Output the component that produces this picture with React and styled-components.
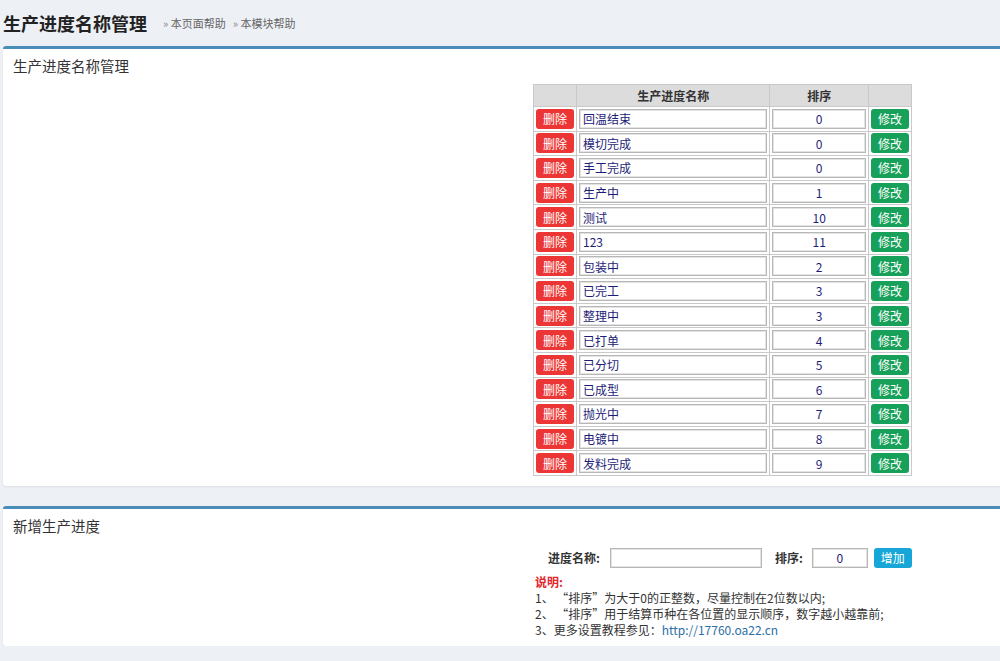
import React from 'react';
import styled, { createGlobalStyle } from 'styled-components';

const GlobalStyle = createGlobalStyle`
  html, body { margin: 0; padding: 0; }
  body {
    background: #edf0f5;
    font-family: "Noto Sans CJK SC", "Noto Sans", "Liberation Sans", sans-serif;
    color: #333;
    overflow: hidden;
  }
`;

const rows = [
  ['回温结束', 0], ['模切完成', 0], ['手工完成', 0], ['生产中', 1], ['测试', 10],
  ['123', 11], ['包装中', 2], ['已完工', 3], ['整理中', 3], ['已打单', 4],
  ['已分切', 5], ['已成型', 6], ['抛光中', 7], ['电镀中', 8], ['发料完成', 9],
];

const Header = styled.div`
  height: 46px;
  display: flex;
  align-items: center;
  padding-left: 3px;
`;

const PageTitle = styled.h1`
  margin: 0;
  font-size: 18px;
  font-weight: bold;
  color: #222;
`;

const HelpLink = styled.span`
  font-size: 11px;
  color: #666;
  margin-left: ${p => p.$first ? '16px' : '7px'};
  &::before { content: '» '; color: #888; }
`;

const Panel = styled.div`
  margin-left: 3px;
  background: #fff;
  border-top: 3px solid #4a8db8;
  border-radius: 3px 0 0 3px;
  box-shadow: 0 1px 2px rgba(0,0,0,0.08);
  padding-bottom: ${p => p.$bottom || 10}px;
  margin-bottom: ${p => p.$gap || 0}px;
`;

const PanelTitle = styled.div`
  height: ${p => p.$h}px;
  padding: 6px 0 0 10px;
  box-sizing: border-box;
  font-size: 14.5px;
  color: #333;
`;

const Body = styled.div`
  margin-left: 530px;
`;

const Table = styled.table`
  border-collapse: collapse;
  width: 379px;
  font-size: 12px;
  td, th { border: 1px solid #c9c9c9; padding: 0 2px; }
  th {
    background: #dcdcdc;
    height: 21px;
    font-weight: bold;
    color: #333;
  }
  td { height: 23.6px; }
`;

const Btn = styled.button`
  display: block;
  width: 38px;
  height: 20px;
  border: none;
  border-radius: 3px;
  padding: 0;
  font-family: inherit;
  font-size: 12px;
  color: #fff;
  background: ${p => p.$color};
  margin: 0 auto;
`;

const Field = styled.input`
  display: block;
  box-sizing: border-box;
  width: 100%;
  height: 20px;
  border: 1px solid #b7b7b7;
  box-shadow: inset 0 0 0 1px #e3e3e3;
  padding: 0 3px;
  font-family: inherit;
  font-size: 12px;
  color: #1d1d78;
  text-align: ${p => p.$center ? 'center' : 'left'};
  background: #fff;
`;

const FormRow = styled.div`
  display: flex;
  align-items: center;
  height: 20px;
  margin: 4px 0 0 15px;
  font-size: 12px;
`;

const Label = styled.span`
  font-weight: bold;
  color: #333;
  margin-right: ${p => p.$mr}px;
  margin-left: ${p => p.$ml || 0}px;
`;

const FormInput = styled(Field)`
  width: ${p => p.$w}px;
`;

const AddBtn = styled(Btn)`
  background: #16a7d8;
  margin: 0 0 0 6px;
`;

const Notes = styled.div`
  margin: 6px 0 0 2px;
  font-size: 12px;
  line-height: 16px;
  color: #333;
`;

const NoteTitle = styled.div`
  color: #e5262b;
  font-weight: bold;
`;

const Link = styled.a`
  color: #2c6ea6;
  text-decoration: none;
`;

export default function App() {
  return (
    <>
      <GlobalStyle />
      <Header>
        <PageTitle>生产进度名称管理</PageTitle>
        <HelpLink $first>本页面帮助</HelpLink>
        <HelpLink>本模块帮助</HelpLink>
      </Header>

      <Panel $gap={20} $bottom={10}>
        <PanelTitle $h={35}>生产进度名称管理</PanelTitle>
        <Body>
          <Table>
            <colgroup>
              <col style={{ width: 43 }} />
              <col style={{ width: 194 }} />
              <col style={{ width: 99 }} />
              <col style={{ width: 43 }} />
            </colgroup>
            <thead>
              <tr>
                <th></th>
                <th>生产进度名称</th>
                <th>排序</th>
                <th></th>
              </tr>
            </thead>
            <tbody>
              {rows.map(([name, sort], i) => (
                <tr key={i}>
                  <td><Btn $color="#ec3636">删除</Btn></td>
                  <td><Field defaultValue={name} /></td>
                  <td><Field $center defaultValue={sort} /></td>
                  <td><Btn $color="#17a05a">修改</Btn></td>
                </tr>
              ))}
            </tbody>
          </Table>
        </Body>
      </Panel>

      <Panel $bottom={8}>
        <PanelTitle $h={35}>新增生产进度</PanelTitle>
        <Body>
          <FormRow>
            <Label $mr={10}>进度名称:</Label>
            <FormInput $w={152} />
            <Label $ml={13} $mr={9}>排序:</Label>
            <FormInput $w={56} $center defaultValue="0" />
            <AddBtn>增加</AddBtn>
          </FormRow>
          <Notes>
            <NoteTitle>说明:</NoteTitle>
            <div>1、 “排序”为大于0的正整数，尽量控制在2位数以内;</div>
            <div>2、 “排序”用于结算币种在各位置的显示顺序，数字越小越靠前;</div>
            <div>3、更多设置教程参见：<Link href="#">http://17760.oa22.cn</Link></div>
          </Notes>
        </Body>
      </Panel>
    </>
  );
}
